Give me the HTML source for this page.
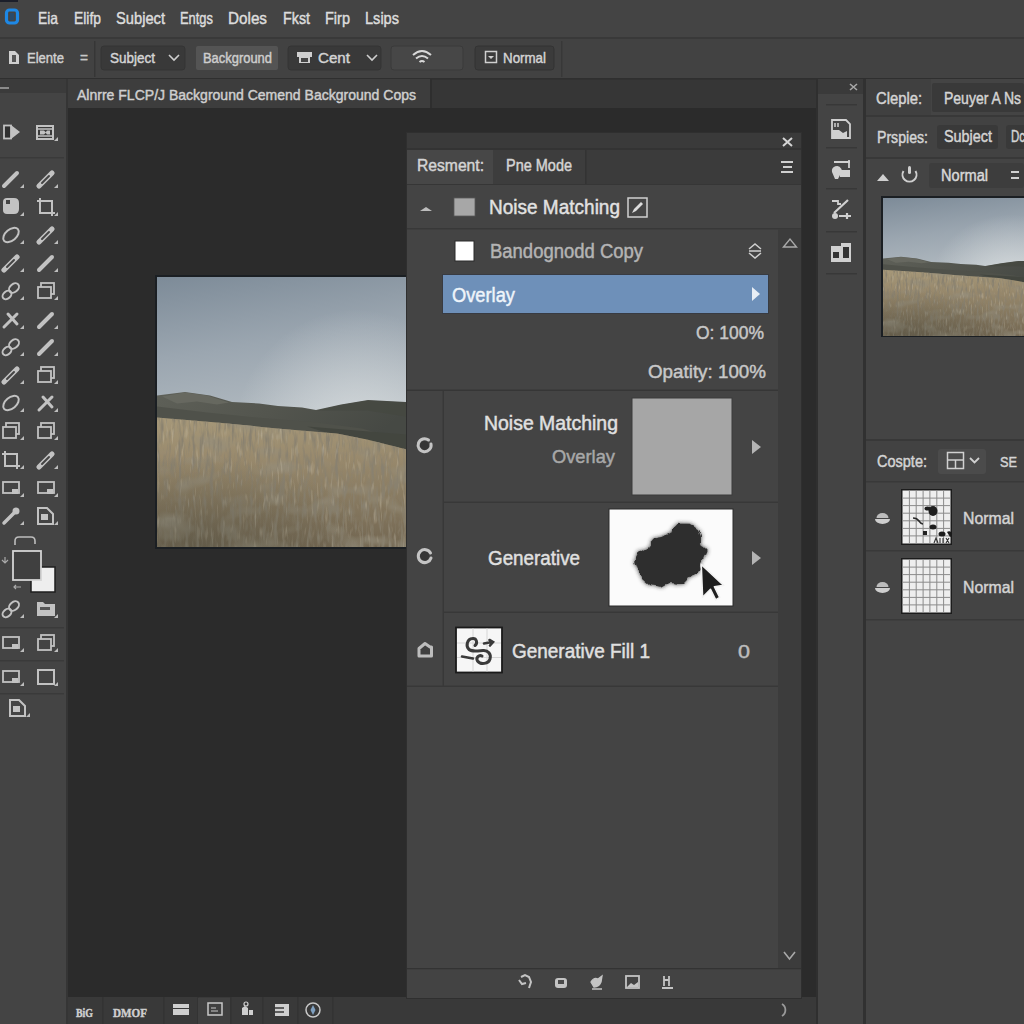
<!DOCTYPE html>
<html><head><meta charset="utf-8">
<style>
html,body{margin:0;padding:0;width:1024px;height:1024px;overflow:hidden;background:#2b2b2b;}
svg text{font-family:"Liberation Sans",sans-serif;}
</style></head><body>
<svg width="1024" height="1024" viewBox="0 0 1024 1024" style="display:block">
<rect x="0" y="0" width="1024" height="1024" fill="#2b2b2b" />
<rect x="0" y="0" width="1024" height="37" fill="#444444" />
<rect x="0" y="0" width="18" height="2" fill="#1c1f2a" />
<rect x="0" y="37" width="1024" height="1.5" fill="#393939" />
<rect x="6.5" y="10" width="11" height="13" rx="3" fill="none" stroke="#1e88e5" stroke-width="3.2"/>
<rect x="10" y="13" width="4" height="7" fill="#2a4a6a"/>
<text x="38" y="23.5" font-size="16.5" fill="#dcdcdc" stroke="#dcdcdc" stroke-width="0.45" textLength="20" lengthAdjust="spacingAndGlyphs" >Eia</text>
<text x="74" y="23.5" font-size="16.5" fill="#dcdcdc" stroke="#dcdcdc" stroke-width="0.45" textLength="27" lengthAdjust="spacingAndGlyphs" >Elifp</text>
<text x="116" y="23.5" font-size="16.5" fill="#dcdcdc" stroke="#dcdcdc" stroke-width="0.45" textLength="49" lengthAdjust="spacingAndGlyphs" >Subject</text>
<text x="180" y="23.5" font-size="16.5" fill="#dcdcdc" stroke="#dcdcdc" stroke-width="0.45" textLength="33" lengthAdjust="spacingAndGlyphs" >Entgs</text>
<text x="228" y="23.5" font-size="16.5" fill="#dcdcdc" stroke="#dcdcdc" stroke-width="0.45" textLength="39" lengthAdjust="spacingAndGlyphs" >Doles</text>
<text x="283" y="23.5" font-size="16.5" fill="#dcdcdc" stroke="#dcdcdc" stroke-width="0.45" textLength="27" lengthAdjust="spacingAndGlyphs" >Fkst</text>
<text x="325" y="23.5" font-size="16.5" fill="#dcdcdc" stroke="#dcdcdc" stroke-width="0.45" textLength="25" lengthAdjust="spacingAndGlyphs" >Firp</text>
<text x="365" y="23.5" font-size="16.5" fill="#dcdcdc" stroke="#dcdcdc" stroke-width="0.45" textLength="34" lengthAdjust="spacingAndGlyphs" >Lsips</text>
<rect x="0" y="38.5" width="1024" height="40.5" fill="#424242" />
<rect x="0" y="78" width="1024" height="1.5" fill="#2f2f2f" />
<path d="M9 51 h6 l4 4 v9 h-10 z" fill="#cfcfcf"/><path d="M12 55 h4 v7 h-4z" fill="#555"/>
<text x="27" y="63" font-size="15" fill="#d0d0d0" stroke="#d0d0d0" stroke-width="0.45" textLength="37" lengthAdjust="spacingAndGlyphs" >Elente</text>
<text x="80" y="63" font-size="15" fill="#c8c8c8" stroke="#c8c8c8" stroke-width="0.45" textLength="8" lengthAdjust="spacingAndGlyphs" >=</text>
<rect x="94" y="41" width="1.5" height="36" fill="#363636" />
<rect x="101" y="46" width="84" height="24" fill="#393939" rx="3" stroke="#343434" stroke-width="1"/>
<text x="110" y="63" font-size="15" fill="#d4d4d4" stroke="#d4d4d4" stroke-width="0.45" textLength="45" lengthAdjust="spacingAndGlyphs" >Subject</text>
<path d="M169 55 l5 5 l5 -5" fill="none" stroke="#cfcfcf" stroke-width="1.6"/>
<rect x="196" y="46" width="82" height="24" fill="#545454" rx="2" />
<text x="203" y="63" font-size="14" fill="#cdcdcd" stroke="#cdcdcd" stroke-width="0.45" textLength="69" lengthAdjust="spacingAndGlyphs" >Background</text>
<rect x="288" y="46" width="93" height="24" fill="#393939" rx="3" stroke="#343434" stroke-width="1"/>
<path d="M297 52 h15 v5 h-2 v6 h-11 v-6 h-2 z" fill="#cfcfcf"/><rect x="301" y="58" width="7" height="4" fill="#444"/>
<text x="318" y="63" font-size="15" fill="#d4d4d4" stroke="#d4d4d4" stroke-width="0.45" textLength="32" lengthAdjust="spacingAndGlyphs" >Cent</text>
<path d="M367 55 l5 5 l5 -5" fill="none" stroke="#cfcfcf" stroke-width="1.6"/>
<rect x="391" y="46" width="72" height="24" fill="#474747" rx="3" stroke="#3a3a3a" stroke-width="1"/>
<path d="M413 55 q9 -8 18 0 M416 58.5 q6 -5 12 0 M419.5 62 q2.5 -2 5 0" fill="none" stroke="#d8d8d8" stroke-width="2"/>
<rect x="475" y="46" width="79" height="24" fill="#3b3b3b" rx="3" stroke="#333" stroke-width="1"/>
<rect x="485.5" y="51.5" width="11" height="11" fill="none" stroke="#cfcfcf" stroke-width="1.5"/><path d="M488 56 h6 l-3 3z" fill="#cfcfcf"/>
<text x="503" y="63" font-size="15" fill="#d4d4d4" stroke="#d4d4d4" stroke-width="0.45" textLength="43" lengthAdjust="spacingAndGlyphs" >Normal</text>
<rect x="561" y="41" width="1.5" height="36" fill="#383838" />
<rect x="0" y="79" width="66" height="945" fill="#444444" />
<rect x="0" y="79" width="66" height="14" fill="#3b3b3b" />
<rect x="0" y="87" width="9" height="2" fill="#8a8a8a" />
<rect x="66" y="79" width="2" height="945" fill="#353535" />
<rect x="0" y="157" width="64" height="1.5" fill="#3a3a3a" />
<rect x="0" y="627" width="64" height="1.5" fill="#3a3a3a" />
<rect x="0" y="660" width="64" height="1.5" fill="#3a3a3a" />
<rect x="0" y="693" width="64" height="1.5" fill="#3a3a3a" />
<rect x="4" y="125.5" width="7" height="13" fill="#303030" stroke="#c2c2c2" stroke-width="1.8"/><path d="M11 125 l9 7 l-9 7 z" fill="#c2c2c2"/>
<rect x="37" y="126" width="16" height="13" fill="#3a3a3a" stroke="#c2c2c2" stroke-width="2"/><path d="M37 129 h16 M37 136 h16" stroke="#c2c2c2" stroke-width="1.5"/><path d="M40 130.5 h4 l2 2 l-2 2 h-4z M50 130.5 h-3 l-1.5 2 l1.5 2 h3z" fill="#c2c2c2"/>
<path d="M54 141 l4 -4 v4 z" fill="#bdbdbd"/>
<path d="M4 186 L17 173" stroke="#c2c2c2" stroke-width="4" stroke-linecap="round"/>
<path d="M20 188 l4 -4 v4 z" fill="#bdbdbd"/>
<path d="M39 186 L52 173" stroke="#c2c2c2" stroke-width="5.2" stroke-linecap="round"/>
<path d="M42 183 L49 176" stroke="#444" stroke-width="2" stroke-linecap="round"/>
<path d="M54 188 l4 -4 v4 z" fill="#bdbdbd"/>
<path d="M3 202 q0 -4 4 -4 h7 q5 0 5 5 v6 q0 5 -5 5 h-7 q-4 0 -4 -4 z" fill="#c2c2c2"/><rect x="6" y="200" width="4" height="4" fill="#444"/>
<path d="M20 216 l4 -4 v4 z" fill="#bdbdbd"/>
<path d="M40 198 v15 h15 M37 201 h15 v15" fill="none" stroke="#c2c2c2" stroke-width="2"/>
<path d="M54 216 l4 -4 v4 z" fill="#bdbdbd"/>
<ellipse cx="11" cy="235" rx="9" ry="5.5" transform="rotate(-40 11 235)" fill="none" stroke="#c2c2c2" stroke-width="2"/>
<path d="M20 244 l4 -4 v4 z" fill="#bdbdbd"/>
<path d="M39 242 L52 229" stroke="#c2c2c2" stroke-width="5.2" stroke-linecap="round"/>
<path d="M42 239 L49 232" stroke="#444" stroke-width="2" stroke-linecap="round"/>
<path d="M54 244 l4 -4 v4 z" fill="#bdbdbd"/>
<path d="M4 270 L17 257" stroke="#c2c2c2" stroke-width="5.2" stroke-linecap="round"/>
<path d="M7 267 L14 260" stroke="#444" stroke-width="2" stroke-linecap="round"/>
<path d="M20 272 l4 -4 v4 z" fill="#bdbdbd"/>
<path d="M39 270 L52 257" stroke="#c2c2c2" stroke-width="4" stroke-linecap="round"/>
<path d="M54 272 l4 -4 v4 z" fill="#bdbdbd"/>
<ellipse cx="14" cy="288" rx="5.5" ry="4" transform="rotate(-40 14 288)" fill="none" stroke="#c2c2c2" stroke-width="2"/>
<ellipse cx="7" cy="295" rx="5" ry="3.5" transform="rotate(-40 7 295)" fill="none" stroke="#c2c2c2" stroke-width="2"/>
<path d="M20 300 l4 -4 v4 z" fill="#bdbdbd"/>
<rect x="41" y="283" width="13" height="11" fill="none" stroke="#c2c2c2" stroke-width="1.8"/>
<rect x="38" y="287" width="13" height="11" fill="#444" stroke="#c2c2c2" stroke-width="1.8"/>
<path d="M54 300 l4 -4 v4 z" fill="#bdbdbd"/>
<path d="M4 327 L17 314 M8 314 L17 324" stroke="#c2c2c2" stroke-width="3" stroke-linecap="round"/>
<path d="M20 329 l4 -4 v4 z" fill="#bdbdbd"/>
<path d="M39 327 L52 314" stroke="#c2c2c2" stroke-width="4" stroke-linecap="round"/>
<path d="M54 329 l4 -4 v4 z" fill="#bdbdbd"/>
<ellipse cx="14" cy="344" rx="5.5" ry="4" transform="rotate(-40 14 344)" fill="none" stroke="#c2c2c2" stroke-width="2"/>
<ellipse cx="7" cy="351" rx="5" ry="3.5" transform="rotate(-40 7 351)" fill="none" stroke="#c2c2c2" stroke-width="2"/>
<path d="M20 356 l4 -4 v4 z" fill="#bdbdbd"/>
<path d="M39 354 L52 341" stroke="#c2c2c2" stroke-width="4" stroke-linecap="round"/>
<path d="M54 356 l4 -4 v4 z" fill="#bdbdbd"/>
<path d="M4 382 L17 369" stroke="#c2c2c2" stroke-width="5.2" stroke-linecap="round"/>
<path d="M7 379 L14 372" stroke="#444" stroke-width="2" stroke-linecap="round"/>
<path d="M20 384 l4 -4 v4 z" fill="#bdbdbd"/>
<rect x="41" y="367" width="13" height="11" fill="none" stroke="#c2c2c2" stroke-width="1.8"/>
<rect x="38" y="371" width="13" height="11" fill="#444" stroke="#c2c2c2" stroke-width="1.8"/>
<path d="M54 384 l4 -4 v4 z" fill="#bdbdbd"/>
<ellipse cx="11" cy="403" rx="9" ry="5.5" transform="rotate(-40 11 403)" fill="none" stroke="#c2c2c2" stroke-width="2"/>
<path d="M20 412 l4 -4 v4 z" fill="#bdbdbd"/>
<path d="M39 410 L52 397 M43 397 L52 407" stroke="#c2c2c2" stroke-width="3" stroke-linecap="round"/>
<path d="M54 412 l4 -4 v4 z" fill="#bdbdbd"/>
<rect x="6" y="423" width="13" height="11" fill="none" stroke="#c2c2c2" stroke-width="1.8"/>
<rect x="3" y="427" width="13" height="11" fill="#444" stroke="#c2c2c2" stroke-width="1.8"/>
<path d="M20 440 l4 -4 v4 z" fill="#bdbdbd"/>
<rect x="41" y="423" width="13" height="11" fill="none" stroke="#c2c2c2" stroke-width="1.8"/>
<rect x="38" y="427" width="13" height="11" fill="#444" stroke="#c2c2c2" stroke-width="1.8"/>
<path d="M54 440 l4 -4 v4 z" fill="#bdbdbd"/>
<path d="M5 451 v15 h15 M2 454 h15 v15" fill="none" stroke="#c2c2c2" stroke-width="2"/>
<path d="M20 469 l4 -4 v4 z" fill="#bdbdbd"/>
<path d="M39 467 L52 454" stroke="#c2c2c2" stroke-width="5.2" stroke-linecap="round"/>
<path d="M42 464 L49 457" stroke="#444" stroke-width="2" stroke-linecap="round"/>
<path d="M54 469 l4 -4 v4 z" fill="#bdbdbd"/>
<rect x="3" y="482" width="16" height="11" fill="none" stroke="#c2c2c2" stroke-width="1.8"/><rect x="12" y="489" width="6" height="5" fill="#c2c2c2"/>
<path d="M20 497 l4 -4 v4 z" fill="#bdbdbd"/>
<rect x="38" y="482" width="16" height="11" fill="none" stroke="#c2c2c2" stroke-width="1.8"/><rect x="47" y="489" width="6" height="5" fill="#c2c2c2"/>
<path d="M54 497 l4 -4 v4 z" fill="#bdbdbd"/>
<path d="M4 523 L16 511" stroke="#c2c2c2" stroke-width="3.5" stroke-linecap="round"/><circle cx="16" cy="511" r="3.5" fill="#c2c2c2"/>
<path d="M20 525 l4 -4 v4 z" fill="#bdbdbd"/>
<path d="M38 508 h9 l6 6 v10 h-15 z" fill="none" stroke="#c2c2c2" stroke-width="2"/><rect x="41" y="514" width="7" height="6" fill="#c2c2c2"/>
<path d="M54 525 l4 -4 v4 z" fill="#bdbdbd"/>
<ellipse cx="14" cy="606" rx="5.5" ry="4" transform="rotate(-40 14 606)" fill="none" stroke="#c2c2c2" stroke-width="2"/>
<ellipse cx="7" cy="613" rx="5" ry="3.5" transform="rotate(-40 7 613)" fill="none" stroke="#c2c2c2" stroke-width="2"/>
<path d="M20 618 l4 -4 v4 z" fill="#bdbdbd"/>
<path d="M37 602 h6 l2 2 h10 v12 h-18 z" fill="#c2c2c2"/><rect x="40" y="607" width="10" height="3" fill="#555"/>
<path d="M54 618 l4 -4 v4 z" fill="#bdbdbd"/>
<rect x="3" y="637" width="16" height="11" fill="none" stroke="#c2c2c2" stroke-width="1.8"/><rect x="12" y="644" width="6" height="5" fill="#c2c2c2"/>
<path d="M20 652 l4 -4 v4 z" fill="#bdbdbd"/>
<rect x="41" y="635" width="13" height="11" fill="none" stroke="#c2c2c2" stroke-width="1.8"/>
<rect x="38" y="639" width="13" height="11" fill="#444" stroke="#c2c2c2" stroke-width="1.8"/>
<path d="M54 652 l4 -4 v4 z" fill="#bdbdbd"/>
<rect x="3" y="671" width="16" height="11" fill="none" stroke="#c2c2c2" stroke-width="1.8"/><rect x="12" y="678" width="6" height="5" fill="#c2c2c2"/>
<path d="M20 686 l4 -4 v4 z" fill="#bdbdbd"/>
<rect x="38.0" y="670.0" width="16" height="14" fill="none" stroke="#c2c2c2" stroke-width="2"/>
<path d="M54 686 l4 -4 v4 z" fill="#bdbdbd"/>
<path d="M10 700 h9 l6 6 v10 h-15 z" fill="none" stroke="#c2c2c2" stroke-width="2"/><rect x="13" y="706" width="7" height="6" fill="#c2c2c2"/>
<path d="M26 717 l4 -4 v4 z" fill="#bdbdbd"/>
<path d="M15 545 v-4 q0 -4 4 -4 h12 q4 0 4 4 v3" fill="none" stroke="#bdbdbd" stroke-width="1.6"/>
<rect x="31" y="567" width="24" height="25" fill="#eeeeee" stroke="#1e1e1e" stroke-width="1.5"/>
<rect x="13" y="551" width="28" height="29" fill="#404040" stroke="#d4d4d4" stroke-width="1.8"/>
<path d="M2 560 l3 3 l3 -3 M5 563 v-6" stroke="#aaa" stroke-width="1.2" fill="none"/>
<path d="M14 587 h7 M16 585 l-2 2 l2 2" stroke="#aaa" stroke-width="1.2" fill="none"/>
<rect x="68" y="79.5" width="748" height="28.5" fill="#363636" />
<rect x="68" y="79" width="362" height="29" fill="#3d3d3d" />
<rect x="430" y="79" width="2" height="29" fill="#2e2e2e" />
<text x="77" y="100" font-size="15" fill="#cfcfcf" stroke="#cfcfcf" stroke-width="0.45" textLength="339" lengthAdjust="spacingAndGlyphs" >Alnrre FLCP/J Background Cemend Background Cops</text>
<rect x="68" y="997" width="748" height="27" fill="#393939" />
<rect x="102" y="997" width="1.5" height="27" fill="#333333" />
<rect x="163" y="997" width="1.5" height="27" fill="#333333" />
<rect x="197" y="997" width="1.5" height="27" fill="#333333" />
<rect x="230" y="997" width="1.5" height="27" fill="#333333" />
<rect x="262" y="997" width="1.5" height="27" fill="#333333" />
<rect x="297" y="997" width="1.5" height="27" fill="#333333" />
<rect x="332" y="997" width="1.5" height="27" fill="#333333" />
<rect x="198" y="998" width="32" height="26" fill="#404040" />
<text x="76" y="1016.5" font-size="13.5" fill="#cfcfcf" stroke="#cfcfcf" stroke-width="0.45" textLength="17" lengthAdjust="spacingAndGlyphs" style="font-family:&quot;Liberation Serif&quot;,serif;font-weight:bold">BiG</text>
<text x="113" y="1016.5" font-size="13.5" fill="#cfcfcf" stroke="#cfcfcf" stroke-width="0.45" textLength="34" lengthAdjust="spacingAndGlyphs" style="font-family:&quot;Liberation Serif&quot;,serif;font-weight:bold">DMOF</text>
<rect x="173" y="1004" width="16" height="4" fill="#cfcfcf"/><rect x="173" y="1009" width="16" height="6" fill="#cfcfcf"/>
<rect x="208" y="1003" width="14" height="12" fill="none" stroke="#c8c8c8" stroke-width="1.5"/><path d="M211 1008 h5 M211 1011 h7" stroke="#c8c8c8" stroke-width="1"/>
<path d="M242 1015 v-7 l3 -2 l3 2 v7 z M249 1015 v-5 h4 v5 z" fill="#cfcfcf"/><circle cx="246" cy="1004" r="2" fill="none" stroke="#cfcfcf" stroke-width="1.2"/>
<rect x="275" y="1004" width="14" height="12" fill="#cfcfcf"/><path d="M275 1008 h9 M275 1012 h9" stroke="#393939" stroke-width="1.5"/>
<circle cx="313" cy="1010" r="7" fill="none" stroke="#c8c8c8" stroke-width="1.5"/><path d="M313 1005 l2.5 5 l-2.5 5 l-2.5 -5 z" fill="#7fa0c0"/>
<rect x="816" y="79" width="2" height="945" fill="#2f2f2f" />
<rect x="818" y="79" width="45" height="945" fill="#444444" />
<rect x="818" y="79" width="45" height="15" fill="#3a3a3a" />
<rect x="863" y="79" width="3" height="945" fill="#313131" />
<rect x="826" y="104" width="31" height="1.5" fill="#383838" />
<rect x="826" y="147" width="31" height="1.5" fill="#383838" />
<rect x="826" y="188" width="31" height="1.5" fill="#383838" />
<rect x="826" y="231" width="31" height="1.5" fill="#383838" />
<rect x="826" y="273" width="31" height="1.5" fill="#383838" />
<rect x="866" y="79" width="158" height="945" fill="#444444" />
<rect x="866" y="79" width="65" height="36" fill="#404040" />
<rect x="932" y="83" width="92" height="29" fill="#393939" rx="2" />
<text x="876" y="104" font-size="16" fill="#d4d4d4" stroke="#d4d4d4" stroke-width="0.45" textLength="46" lengthAdjust="spacingAndGlyphs" >Cleple:</text>
<text x="944" y="104" font-size="16" fill="#d4d4d4" stroke="#d4d4d4" stroke-width="0.45" textLength="77" lengthAdjust="spacingAndGlyphs" >Peuyer A Ns</text>
<rect x="866" y="115" width="158" height="2" fill="#383838" />
<rect x="866" y="117" width="158" height="40" fill="#424242" />
<text x="877" y="142.5" font-size="16" fill="#d4d4d4" stroke="#d4d4d4" stroke-width="0.45" textLength="51" lengthAdjust="spacingAndGlyphs" >Prspies:</text>
<rect x="937" y="125" width="61" height="24" fill="#393939" rx="3" />
<text x="944" y="141.5" font-size="16" fill="#d4d4d4" stroke="#d4d4d4" stroke-width="0.45" textLength="48" lengthAdjust="spacingAndGlyphs" >Subject</text>
<rect x="1006" y="125" width="30" height="24" fill="#393939" rx="3" />
<text x="1011" y="141.5" font-size="16" fill="#d4d4d4" stroke="#d4d4d4" stroke-width="0.45" textLength="14" lengthAdjust="spacingAndGlyphs" >Dc</text>
<rect x="866" y="157" width="158" height="2" fill="#383838" />
<path d="M877 181 l6 -7 l6 7 z" fill="#d0d0d0"/>
<path d="M903.5 171 a7 7 0 1 0 12 0" fill="none" stroke="#cfcfcf" stroke-width="2"/><rect x="908" y="166" width="3" height="8" rx="1.5" fill="#cfcfcf"/>
<rect x="929" y="163" width="95" height="25" fill="#3d3d3d" rx="3" />
<text x="941" y="181" font-size="16" fill="#d8d8d8" stroke="#d8d8d8" stroke-width="0.45" textLength="47" lengthAdjust="spacingAndGlyphs" >Normal</text>
<path d="M1011 172 h8 M1011 178 h8" stroke="#cfcfcf" stroke-width="2"/>
<rect x="866" y="439" width="158" height="2" fill="#383838" />
<rect x="866" y="441" width="158" height="40" fill="#424242" />
<text x="877" y="467" font-size="16" fill="#d4d4d4" stroke="#d4d4d4" stroke-width="0.45" textLength="50" lengthAdjust="spacingAndGlyphs" >Cospte:</text>
<rect x="938" y="449" width="48" height="25" fill="#4b4b4b" rx="3" />
<rect x="947.5" y="452.5" width="16" height="16" fill="none" stroke="#d0d0d0" stroke-width="1.5"/><path d="M947.5 460 h16 M955.5 460 v8.5" stroke="#d0d0d0" stroke-width="1.5"/>
<path d="M970 458 l4.5 4.5 l4.5 -4.5" fill="none" stroke="#d0d0d0" stroke-width="1.8"/>
<text x="1000" y="467" font-size="15" fill="#d4d4d4" stroke="#d4d4d4" stroke-width="0.45" textLength="17" lengthAdjust="spacingAndGlyphs" >SE</text>
<rect x="866" y="481" width="158" height="1.5" fill="#393939" />
<rect x="866" y="550" width="158" height="1.5" fill="#393939" />
<rect x="866" y="619" width="158" height="1.5" fill="#393939" />
<path d="M875 519 a7.5 5 0 0 0 15 0 z" fill="#cfcfcf"/><path d="M876.5 518 a6 5 0 0 1 12 0 z" fill="#bdbdbd"/>
<path d="M875 588 a7.5 5 0 0 0 15 0 z" fill="#cfcfcf"/><path d="M876.5 587 a6 5 0 0 1 12 0 z" fill="#bdbdbd"/>
<text x="963" y="524" font-size="17" fill="#d4d4d4" stroke="#d4d4d4" stroke-width="0.45" textLength="51" lengthAdjust="spacingAndGlyphs" >Normal</text>
<text x="963" y="592.5" font-size="17" fill="#d4d4d4" stroke="#d4d4d4" stroke-width="0.45" textLength="51" lengthAdjust="spacingAndGlyphs" >Normal</text>
<rect x="155" y="275" width="252" height="274" fill="#1b1f23" />
<svg x="157" y="277" width="249" height="270" viewBox="0 0 249 271" preserveAspectRatio="none">
<defs>
<linearGradient id="skya" x1="0" y1="0" x2="0.15" y2="1">
<stop offset="0" stop-color="#7d8b98"/><stop offset="0.3" stop-color="#9ba6b0"/><stop offset="0.75" stop-color="#bfc6ca"/><stop offset="1" stop-color="#c8cdd0"/></linearGradient>
<radialGradient id="cla" cx="0.8" cy="0.62" r="0.5"><stop offset="0" stop-color="#dfe3e4" stop-opacity="0.8"/><stop offset="1" stop-color="#dfe3e4" stop-opacity="0"/></radialGradient>
<linearGradient id="gra" x1="0" y1="0" x2="0" y2="1">
<stop offset="0" stop-color="#a69879"/><stop offset="0.3" stop-color="#998a6d"/><stop offset="1" stop-color="#736752"/></linearGradient>
<filter id="txa" x="0" y="0" width="1" height="1"><feTurbulence type="fractalNoise" baseFrequency="0.28 0.045" numOctaves="3" seed="7"/>
<feColorMatrix values="0 0 0 0 0.25  0 0 0 0 0.22  0 0 0 0 0.16  0 -3.2 0 0 1.75"/><feGaussianBlur stdDeviation="0.4"/></filter>
<filter id="tla" x="0" y="0" width="1" height="1"><feTurbulence type="fractalNoise" baseFrequency="0.35 0.06" numOctaves="2" seed="11"/>
<feColorMatrix values="0 0 0 0 0.78  0 0 0 0 0.72  0 0 0 0 0.58  0 1.0 0 0 -0.6"/><feGaussianBlur stdDeviation="0.6"/></filter>
<filter id="tpa" x="0" y="0" width="1" height="1"><feTurbulence type="fractalNoise" baseFrequency="0.03 0.05" numOctaves="2" seed="3"/><feColorMatrix values="0 0 0 0 0.3  0 0 0 0 0.27  0 0 0 0 0.2  0 -3 0 0 1.45"/></filter>
<radialGradient id="dka" cx="0.15" cy="1" r="0.7"><stop offset="0" stop-color="#4e4c3e" stop-opacity="0.45"/><stop offset="1" stop-color="#4e4c3e" stop-opacity="0"/></radialGradient>
<clipPath id="gca"><path d="M0 141 L60 146 L120 152 L180 157 L210 163 L249 173 L249 271 L0 271 Z"/></clipPath>
</defs>
<rect x="0" y="0" width="249" height="271" fill="url(#skya)"/>
<rect x="0" y="0" width="249" height="271" fill="url(#cla)"/>
<linearGradient id="mta" x1="0" y1="0" x2="1" y2="0.3"><stop offset="0" stop-color="#5e6058"/><stop offset="0.5" stop-color="#53554e"/><stop offset="1" stop-color="#464944"/></linearGradient>
<path d="M0 119 L28 115.5 L53 119 L75 125.5 L102 127 L121 129.5 L145 131 L159 133.5 L184 128 L211 123.5 L249 125.5 L249 180 L0 180 Z" fill="url(#mta)"/>
<path d="M0 130 L50 136 L100 141 L160 146 L205 152 L249 165 L249 180 L0 180 Z" fill="#4f514a"/>
<path d="M150 150 L249 158 L249 178 L200 166 Z" fill="#43463f"/>
<path d="M5 120 L28 116 L50 119 L72 126 L60 128 L40 125 L20 127 Z" fill="#6c6e65" opacity="0.7"/>
<path d="M160 134 L184 128.5 L211 124 L249 126 L249 140 L210 134 Z" fill="#44473f" opacity="0.6"/>
<path d="M0 141 L60 146 L120 152 L180 157 L210 163 L249 173 L249 271 L0 271 Z" fill="url(#gra)"/>
<g clip-path="url(#gca)"><rect x="0" y="141" width="249" height="130" filter="url(#tpa)"/><rect x="0" y="141" width="249" height="130" filter="url(#txa)"/><rect x="0" y="141" width="249" height="130" filter="url(#tla)"/><rect x="0" y="141" width="249" height="130" fill="url(#dka)"/></g>
</svg>
<rect x="406" y="132" width="396" height="867" fill="#2f2f2f" />
<rect x="407" y="133" width="394" height="865" fill="#444444" />
<rect x="407" y="133" width="394" height="15" fill="#3a3a3a" />
<rect x="407" y="148" width="394" height="2" fill="#333333" />
<path d="M783 138 l9 8 M792 138 l-9 8" stroke="#d4d4d4" stroke-width="2"/>
<rect x="407" y="150" width="394" height="34" fill="#3b3b3b" />
<rect x="407" y="150" width="86" height="34" fill="#474747" />
<rect x="493" y="150" width="92" height="34" fill="#3d3d3d" />
<rect x="585" y="150" width="1.5" height="34" fill="#333333" />
<text x="417" y="171" font-size="16" fill="#d4d4d4" stroke="#d4d4d4" stroke-width="0.45" textLength="67" lengthAdjust="spacingAndGlyphs" >Resment:</text>
<text x="506" y="171" font-size="16" fill="#d4d4d4" stroke="#d4d4d4" stroke-width="0.45" textLength="66" lengthAdjust="spacingAndGlyphs" >Pne Mode</text>
<path d="M781 162 h12 M783 167 h9 M781 172 h12" stroke="#cfcfcf" stroke-width="1.8"/>
<rect x="407" y="184" width="394" height="1.5" fill="#363636" />
<rect x="407" y="185" width="394" height="43" fill="#444444" />
<path d="M420 211 l6 -4 l6 4 z" fill="#bdbdbd"/>
<rect x="454" y="198" width="21" height="18" fill="#a7a7a7" stroke="#5a5a5a" stroke-width="0.8"/>
<text x="489" y="214" font-size="20.5" fill="#e2e2e2" stroke="#e2e2e2" stroke-width="0.45" textLength="131" lengthAdjust="spacingAndGlyphs" >Noise Matching</text>
<rect x="628" y="198" width="19" height="19" fill="none" stroke="#cfcfcf" stroke-width="1.5"/><path d="M632 213 l2 -4 l7 -7 l2 2 l-7 7 z" fill="#dcdcdc"/>
<rect x="407" y="228" width="394" height="1.5" fill="#383838" />
<rect x="778" y="229" width="23" height="740" fill="#3c3c3c" />
<path d="M783.5 247 l6.5 -8 l6.5 8 z" fill="none" stroke="#a9a9a9" stroke-width="1.4"/>
<path d="M784 952 l5.5 7 l5.5 -7" fill="none" stroke="#a9a9a9" stroke-width="1.6"/>
<rect x="455" y="241" width="19" height="20" fill="#ffffff" stroke="#2a2a2a" stroke-width="1"/>
<text x="490" y="258" font-size="19.5" fill="#b4b4b4" stroke="#b4b4b4" stroke-width="0.45" textLength="153" lengthAdjust="spacingAndGlyphs" >Bandognodd Copy</text>
<path d="M749 249 l6 -5 l6 5 M749 253 l6 5 l6 -5 M749 251 h12" fill="none" stroke="#cfcfcf" stroke-width="1.5"/>
<rect x="442" y="274" width="327" height="40" fill="#383b42" />
<rect x="443" y="275" width="325" height="38" fill="#6e90b9" />
<text x="452" y="302" font-size="19.5" fill="#eef4fa" stroke="#eef4fa" stroke-width="0.45" textLength="63" lengthAdjust="spacingAndGlyphs" >Overlay</text>
<path d="M752 287 l8 7 l-8 7 z" fill="#e8eef5"/>
<text x="696" y="339" font-size="18.5" fill="#c8c8c8" stroke="#c8c8c8" stroke-width="0.45" textLength="68" lengthAdjust="spacingAndGlyphs" >O: 100%</text>
<text x="648" y="378" font-size="18.5" fill="#c8c8c8" stroke="#c8c8c8" stroke-width="0.45" textLength="118" lengthAdjust="spacingAndGlyphs" >Opatity: 100%</text>
<rect x="407" y="389.5" width="371" height="1.5" fill="#363636" />
<rect x="442.5" y="391" width="1.5" height="295" fill="#383838" />
<text x="484" y="430" font-size="19.5" fill="#e0e0e0" stroke="#e0e0e0" stroke-width="0.45" textLength="134" lengthAdjust="spacingAndGlyphs" >Noise Matching</text>
<text x="552" y="463" font-size="18.5" fill="#a8a8a8" stroke="#a8a8a8" stroke-width="0.45" textLength="63" lengthAdjust="spacingAndGlyphs" >Overlay</text>
<rect x="632" y="398" width="100" height="97" fill="#a6a6a6" stroke="#3a3a3a" stroke-width="1"/>
<path d="M752 440 l9 7 l-9 7 z" fill="#b4b4b4"/>
<rect x="443" y="501.5" width="335" height="1.5" fill="#383838" />
<text x="488" y="565" font-size="19.5" fill="#e0e0e0" stroke="#e0e0e0" stroke-width="0.45" textLength="92" lengthAdjust="spacingAndGlyphs" >Generative</text>
<rect x="609" y="509" width="124" height="97" fill="#fbfbfb" stroke="#2a2a2a" stroke-width="1"/>
<filter id="blb" x="-0.2" y="-0.2" width="1.4" height="1.4"><feTurbulence type="fractalNoise" baseFrequency="0.12" numOctaves="2" seed="5" result="n"/><feDisplacementMap in="SourceGraphic" in2="n" scale="7" xChannelSelector="R" yChannelSelector="G" result="d0"/><feGaussianBlur in="d0" stdDeviation="0.5" result="d"/><feGaussianBlur in="d0" stdDeviation="2" result="b"/><feMerge><feMergeNode in="b"/><feMergeNode in="d"/></feMerge></filter>
<path d="M635.3 561.7 L639.3 553.8 L647.2 548.5 L655.1 539.3 L661.7 538 L673.6 531.4 L678.8 524.8 L689.4 524.8 L697.3 530 L699.9 536.6 L699.9 544.5 L706.5 549.8 L702.6 560.4 L696 570.9 L686.7 578.8 L681.5 584.1 L668.3 582.8 L661.7 586.7 L651.1 585.4 L643.2 578.8 L638 569.6 Z" fill="#2e2e2e" stroke="#2e2e2e" stroke-width="2" stroke-linejoin="round" filter="url(#blb)"/>
<path d="M701.2 564.3 L702.6 597.3 L710.5 589.4 L715.7 599.9 L719.7 597.3 L714.4 586.7 L723.7 585.4 Z" fill="#1e1e1e" stroke="#f2f2f2" stroke-width="1.6" stroke-linejoin="round"/>
<path d="M752 551 l9 7 l-9 7 z" fill="#b4b4b4"/>
<rect x="443" y="611.5" width="335" height="1.5" fill="#383838" />
<rect x="456" y="627.5" width="46" height="45" fill="#f6f6f6" stroke="#1a1a1a" stroke-width="1.8"/>
<path d="M473 628.5 V671.5 M487 628.5 V671.5 M457 643 H501 M457 657.5 H501" stroke="#d6d6d6" stroke-width="1"/>
<path d="M475 645.5 C478 643, 476.5 638, 472.5 638.5 C467 639, 465.5 646, 469 649.5 C472 652, 477 651, 483 650.5 C488 650, 491.5 654, 490 659 C488.5 664, 480.5 665, 477.5 661 C475.5 657.5, 479 654.5, 482 656" fill="none" stroke="#3a3a3a" stroke-width="3" stroke-linecap="round"/>
<path d="M484 643.5 L492 642 M489.5 640 L493 642 L490 645.5 M462 656.5 L473 658.5" fill="none" stroke="#3a3a3a" stroke-width="2.6" stroke-linecap="round"/>
<text x="512" y="658" font-size="19.5" fill="#e0e0e0" stroke="#e0e0e0" stroke-width="0.45" textLength="138" lengthAdjust="spacingAndGlyphs" >Generative Fill 1</text>
<text x="738" y="658" font-size="18.5" fill="#bdbdbd" stroke="#bdbdbd" stroke-width="0.45" textLength="12" lengthAdjust="spacingAndGlyphs" >0</text>
<rect x="407" y="685.5" width="371" height="1.5" fill="#383838" />
<circle cx="424.5" cy="445.5" r="4.5" fill="#353535"/><path d="M428.5 440 a6.5 6.5 0 1 0 2.5 4" fill="none" stroke="#c4c4c4" stroke-width="3" stroke-linecap="round"/>
<circle cx="424.5" cy="556" r="4.5" fill="#353535"/><path d="M430.5 553 a6.5 6.5 0 1 0 0.5 5" fill="none" stroke="#c4c4c4" stroke-width="3" stroke-linecap="round"/>
<path d="M419 656 v-7.5 l6 -5 l5 3.5 h1.5 v9 z" fill="#404040" stroke="#bdbdbd" stroke-width="3" stroke-linejoin="round"/>
<rect x="407" y="968" width="394" height="1.5" fill="#333333" />
<rect x="407" y="969.5" width="394" height="28.5" fill="#434343" />
<path d="M521 977 l4 -2 l4 2 l2 5 l-2 6 M519 980 l3 4 l4 -1" fill="none" stroke="#c4c4c4" stroke-width="2"/>
<rect x="555" y="978" width="12" height="10" rx="3" fill="#c4c4c4"/><rect x="558" y="980" width="6" height="4" fill="#4a4a4a"/>
<path d="M591 982 q3 -5 7 -3 l4 -3 l-1 6 q-2 5 -7 5 z M592 989 h10" fill="#c4c4c4" stroke="#c4c4c4" stroke-width="1.3"/>
<rect x="626" y="976" width="13" height="12" fill="none" stroke="#c4c4c4" stroke-width="1.8"/><path d="M627 987 l4 -4 l3 2 l4 -3 v5 z" fill="#c4c4c4"/>
<path d="M664 976 v10 M669 976 v10 M664 980 h5 M662 988 h11" stroke="#c4c4c4" stroke-width="1.8"/>
<path d="M782 1004 a7 7 0 0 1 0 12" fill="none" stroke="#9a9a9a" stroke-width="1.8"/>
<rect x="881" y="196" width="143" height="141" fill="#1b1f23" />
<svg x="883" y="198" width="160" height="138" viewBox="0 0 249 271" preserveAspectRatio="none">
<defs>
<linearGradient id="skyb" x1="0" y1="0" x2="0.15" y2="1">
<stop offset="0" stop-color="#7d8b98"/><stop offset="0.3" stop-color="#9ba6b0"/><stop offset="0.75" stop-color="#bfc6ca"/><stop offset="1" stop-color="#c8cdd0"/></linearGradient>
<radialGradient id="clb" cx="0.8" cy="0.62" r="0.5"><stop offset="0" stop-color="#dfe3e4" stop-opacity="0.8"/><stop offset="1" stop-color="#dfe3e4" stop-opacity="0"/></radialGradient>
<linearGradient id="grb" x1="0" y1="0" x2="0" y2="1">
<stop offset="0" stop-color="#a69879"/><stop offset="0.3" stop-color="#998a6d"/><stop offset="1" stop-color="#736752"/></linearGradient>
<filter id="txb" x="0" y="0" width="1" height="1"><feTurbulence type="fractalNoise" baseFrequency="0.28 0.045" numOctaves="3" seed="7"/>
<feColorMatrix values="0 0 0 0 0.25  0 0 0 0 0.22  0 0 0 0 0.16  0 -3.2 0 0 1.75"/><feGaussianBlur stdDeviation="0.4"/></filter>
<filter id="tlb" x="0" y="0" width="1" height="1"><feTurbulence type="fractalNoise" baseFrequency="0.35 0.06" numOctaves="2" seed="11"/>
<feColorMatrix values="0 0 0 0 0.78  0 0 0 0 0.72  0 0 0 0 0.58  0 1.0 0 0 -0.6"/><feGaussianBlur stdDeviation="0.6"/></filter>
<filter id="tpb" x="0" y="0" width="1" height="1"><feTurbulence type="fractalNoise" baseFrequency="0.03 0.05" numOctaves="2" seed="3"/><feColorMatrix values="0 0 0 0 0.3  0 0 0 0 0.27  0 0 0 0 0.2  0 -3 0 0 1.45"/></filter>
<radialGradient id="dkb" cx="0.15" cy="1" r="0.7"><stop offset="0" stop-color="#4e4c3e" stop-opacity="0.45"/><stop offset="1" stop-color="#4e4c3e" stop-opacity="0"/></radialGradient>
<clipPath id="gcb"><path d="M0 141 L60 146 L120 152 L180 157 L210 163 L249 173 L249 271 L0 271 Z"/></clipPath>
</defs>
<rect x="0" y="0" width="249" height="271" fill="url(#skyb)"/>
<rect x="0" y="0" width="249" height="271" fill="url(#clb)"/>
<linearGradient id="mtb" x1="0" y1="0" x2="1" y2="0.3"><stop offset="0" stop-color="#5e6058"/><stop offset="0.5" stop-color="#53554e"/><stop offset="1" stop-color="#464944"/></linearGradient>
<path d="M0 119 L28 115.5 L53 119 L75 125.5 L102 127 L121 129.5 L145 131 L159 133.5 L184 128 L211 123.5 L249 125.5 L249 180 L0 180 Z" fill="url(#mtb)"/>
<path d="M0 130 L50 136 L100 141 L160 146 L205 152 L249 165 L249 180 L0 180 Z" fill="#4f514a"/>
<path d="M150 150 L249 158 L249 178 L200 166 Z" fill="#43463f"/>
<path d="M5 120 L28 116 L50 119 L72 126 L60 128 L40 125 L20 127 Z" fill="#6c6e65" opacity="0.7"/>
<path d="M160 134 L184 128.5 L211 124 L249 126 L249 140 L210 134 Z" fill="#44473f" opacity="0.6"/>
<path d="M0 141 L60 146 L120 152 L180 157 L210 163 L249 173 L249 271 L0 271 Z" fill="url(#grb)"/>
<g clip-path="url(#gcb)"><rect x="0" y="141" width="249" height="130" filter="url(#tpb)"/><rect x="0" y="141" width="249" height="130" filter="url(#txb)"/><rect x="0" y="141" width="249" height="130" filter="url(#tlb)"/><rect x="0" y="141" width="249" height="130" fill="url(#dkb)"/></g>
</svg>
<rect x="901" y="489" width="51" height="56" fill="#1c1c1c" />
<rect x="902.5" y="490.5" width="48" height="53" fill="#eeeeee" />
<path d="M909.4 490.5 V543.5 M916.2 490.5 V543.5 M923.1 490.5 V543.5 M929.9 490.5 V543.5 M936.8 490.5 V543.5 M943.6 490.5 V543.5 M902.5 498.1 H950.5 M902.5 505.6 H950.5 M902.5 513.2 H950.5 M902.5 520.8 H950.5 M902.5 528.4 H950.5 M902.5 535.9 H950.5" stroke="#8a8a8a" stroke-width="1"/>
<ellipse cx="933" cy="511" rx="4.5" ry="5" fill="#1e1e1e"/><ellipse cx="927.5" cy="508.5" rx="3" ry="2" fill="#1e1e1e"/>
<path d="M913 518 q4 0 6 3 q2 3 4 3" fill="none" stroke="#2a2a2a" stroke-width="1.6"/>
<ellipse cx="933" cy="527" rx="3.5" ry="2.5" fill="#1e1e1e"/><rect x="923" y="531" width="4" height="4" fill="#222"/><ellipse cx="942" cy="534" rx="3.5" ry="2.5" fill="#1a1a1a"/><path d="M947 532 a3 3 0 1 1 3 5" fill="#1a1a1a"/>
<path d="M934 543 l2 -5 l2 5 M940 538 v5 M943 538 v5 M946 538 l3 5 M949 538 l-3 5" stroke="#333" stroke-width="1.1" fill="none"/>
<rect x="901" y="558" width="51" height="56" fill="#1c1c1c" />
<rect x="902.5" y="559.5" width="48" height="53" fill="#eeeeee" />
<path d="M909.4 559.5 V612.5 M916.2 559.5 V612.5 M923.1 559.5 V612.5 M929.9 559.5 V612.5 M936.8 559.5 V612.5 M943.6 559.5 V612.5 M902.5 567.1 H950.5 M902.5 574.6 H950.5 M902.5 582.2 H950.5 M902.5 589.8 H950.5 M902.5 597.4 H950.5 M902.5 604.9 H950.5" stroke="#8a8a8a" stroke-width="1"/>
<path d="M850 84 l7 6 M857 84 l-7 6" stroke="#a8a8a8" stroke-width="1.6"/>
<path d="M832 120 h14 l4 4 v14 h-18 z" fill="none" stroke="#d0d0d0" stroke-width="1.8"/><path d="M832 130 h7 l4 3 l4 -2 v7 h-15 z" fill="#d0d0d0"/><path d="M835 123 v4 M838 123 v4" stroke="#d0d0d0" stroke-width="1.5"/>
<path d="M834 162 h16 M849 160 v8" stroke="#d0d0d0" stroke-width="1.8"/><path d="M832 172 a5 5 0 1 1 8 3 l-2 4 h-3 z" fill="#d0d0d0"/><rect x="840" y="170" width="10" height="7" fill="#d0d0d0"/>
<path d="M834 213 L848 200 M839 216 h12 M847 213 v6" stroke="#d0d0d0" stroke-width="2.2"/><circle cx="835" cy="216" r="3" fill="#d0d0d0"/><path d="M832 201 h6 v3 h3" fill="none" stroke="#d0d0d0" stroke-width="1.8"/>
<rect x="831" y="246" width="10" height="16" fill="#d0d0d0"/><rect x="841" y="243" width="10" height="19" fill="#d0d0d0"/><rect x="833" y="252" width="6" height="6" fill="#333"/><rect x="843" y="247" width="6" height="11" fill="#333"/>
</svg>
</body></html>
